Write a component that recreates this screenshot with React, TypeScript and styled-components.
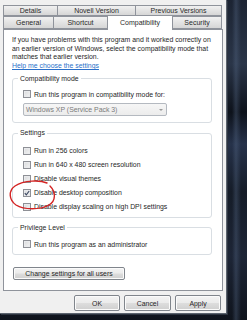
import React from "react";
import styled, { createGlobalStyle } from "styled-components";

const Global = createGlobalStyle`
  html, body { margin: 0; padding: 0; }
  body {
    width: 247px;
    height: 320px;
    overflow: hidden;
    background: #121a26;
    font-family: "Liberation Sans", Arial, sans-serif;
  }
  * { box-sizing: border-box; }
`;

const Screen = styled.div`
  position: relative;
  width: 247px;
  height: 320px;
  overflow: hidden;
  background:
    linear-gradient(90deg, rgba(0,0,0,0) 0, rgba(0,0,0,0) 232px, rgba(90,110,140,0.35) 236px, rgba(0,0,0,0) 241px),
    linear-gradient(180deg, #1c2433 0%, #2a3548 20%, #0d121b 35%, #26324a 45%, #151c28 60%, #1d2536 80%, #0f141d 100%);
`;

const Dialog = styled.div`
  width: 227px;
  height: 314px;
  background: #f0f0f0;
  border-right: 1px solid #5b636e;
  border-bottom: 1px solid #5b636e;
  padding: 5px 0 0 3px;
  display: flex;
  flex-direction: column;
  box-shadow: 1px 1px 0 #2d3440;
`;

const TabRow = styled.div`
  display: flex;
  align-items: flex-end;
  height: ${(p: { $h: number }) => p.$h}px;
`;

const Tab = styled.div<{ $w: number; $active?: boolean }>`
  width: ${(p) => p.$w}px;
  margin-left: -1px;
  &:first-child { margin-left: 0; }
  height: ${(p) => (p.$active ? 15 : 100)}${(p) => (p.$active ? "px" : "%")};
  border: 1px solid #8f939b;
  border-bottom: ${(p) => (p.$active ? "none" : "1px solid #8f939b")};
  background: ${(p) =>
    p.$active ? "#ffffff" : "linear-gradient(180deg, #f1f1f1 0%, #e3e3e3 50%, #d6d6d6 100%)"};
  color: #2a2a2a;
  font-size: 7px;
  line-height: 1;
  display: flex;
  align-items: ${(p) => (p.$active ? "flex-start" : "center")};
  padding-top: ${(p) => (p.$active ? 3 : 0)}px;
  justify-content: center;
  white-space: nowrap;
  position: relative;
  z-index: ${(p) => (p.$active ? 2 : 1)};
  margin-bottom: ${(p) => (p.$active ? -1 : 0)}px;
`;

const Page = styled.div`
  width: 220px;
  height: 262px;
  background: #ffffff;
  border: 1px solid #8f939b;
  padding: 6px 10px 0 8px;
  display: flex;
  flex-direction: column;
  color: #262626;
  font-size: 6.9px;
`;

const Intro = styled.p`
  margin: 0;
  line-height: 8.5px;
`;

const Link = styled.a`
  color: #2a6fc9;
  text-decoration: underline;
  line-height: 8.5px;
  margin-top: 0.5px;
  align-self: flex-start;
`;

const Group = styled.fieldset<{ $mt: number; $pb: number }>`
  margin: ${(p) => p.$mt}px 0 0 0;
  padding: 0 0 ${(p) => p.$pb}px 10px;
  border: 1px solid #d9dee3;
  border-radius: 3px;
  min-width: 0;
  display: flex;
  flex-direction: column;
`;

const Legend = styled.legend`
  padding: 0 2px;
  margin-left: -5px;
  line-height: 8.5px;
  color: #262626;
`;

const Row = styled.div<{ $h: number }>`
  display: flex;
  align-items: center;
  height: ${(p) => p.$h}px;
  gap: 3px;
  white-space: nowrap;
`;

const Box = styled.span<{ $checked?: boolean }>`
  width: 8px;
  height: 8px;
  flex: none;
  border: 1px solid #8e9096;
  background: linear-gradient(135deg, #d8d9db 0%, #f4f4f4 100%);
  box-shadow: inset 0 0 0 1px #e9eaec;
  display: flex;
  align-items: center;
  justify-content: center;
`;

const Select = styled.div`
  width: 144px;
  height: 13px;
  margin-top: 4px;
  border: 1px solid #b4b9c0;
  border-radius: 2px;
  background: linear-gradient(180deg, #f6f6f6 0%, #ececec 100%);
  color: #7b7b7b;
  display: flex;
  align-items: center;
  justify-content: space-between;
  padding: 0 3px 0 2px;
`;

const Arrow = styled.span`
  width: 0;
  height: 0;
  border-left: 2px solid transparent;
  border-right: 2px solid transparent;
  border-top: 2px solid #9a9a9a;
`;

const Button = styled.div<{ $w: number }>`
  width: ${(p) => p.$w}px;
  height: 13px;
  border: 1px solid #80858c;
  border-radius: 2px;
  background: linear-gradient(180deg, #f4f4f4 0%, #ebebeb 48%, #dddddd 52%, #cfcfcf 100%);
  box-shadow: inset 0 0 0 1px #fbfbfb;
  display: flex;
  align-items: center;
  justify-content: center;
  color: #262626;
  font-size: 6.9px;
  white-space: nowrap;
`;

const PageButton = styled(Button)`
  margin-top: 12px;
  margin-left: 1px;
`;

const Footer = styled.div`
  display: flex;
  gap: 4px;
  padding-left: 71px;
  margin-top: 4px;
`;

const FooterButton = styled(Button)`
  height: 16px;
`;

const Mark = styled.svg`
  position: absolute;
  left: 0;
  top: 0;
  pointer-events: none;
`;

function Check({ label, checked, h }: { label: string; checked?: boolean; h: number }) {
  return (
    <Row $h={h}>
      <Box $checked={checked}>
        {checked && (
          <svg width="6" height="6" viewBox="0 0 6 6">
            <path d="M0.8 3.2 L2.3 4.8 L5.2 1" fill="none" stroke="#3a4660" strokeWidth="1.1" />
          </svg>
        )}
      </Box>
      <span>{label}</span>
    </Row>
  );
}

export default function App() {
  return (
    <Screen>
      <Global />
      <Dialog>
        <TabRow $h={11}>
          <Tab $w={55}>Details</Tab>
          <Tab $w={79}>Novell Version</Tab>
          <Tab $w={87}>Previous Versions</Tab>
        </TabRow>
        <TabRow $h={13}>
          <Tab $w={51}>General</Tab>
          <Tab $w={55}>Shortcut</Tab>
          <Tab $w={66} $active>Compatibility</Tab>
          <Tab $w={50}>Security</Tab>
        </TabRow>
        <Page>
          <Intro>
            If you have problems with this program and it worked correctly on
            <br />
            an earlier version of Windows, select the compatibility mode that
            <br />
            matches that earlier version.
          </Intro>
          <Link>Help me choose the settings</Link>
          <Group $mt={4} $pb={6}>
            <Legend>Compatibility mode</Legend>
            <Row $h={6} />
            <Check h={10} label="Run this program in compatibility mode for:" />
            <Select>
              <span>Windows XP (Service Pack 3)</span>
              <Arrow />
            </Select>
          </Group>
          <Group $mt={6} $pb={3}>
            <Legend>Settings</Legend>
            <Row $h={6} />
            <Check h={14} label="Run in 256 colors" />
            <Check h={14} label="Run in 640 x 480 screen resolution" />
            <Check h={14} label="Disable visual themes" />
            <Check h={14} checked label="Disable desktop composition" />
            <Check h={14} label="Disable display scaling on high DPI settings" />
          </Group>
          <Group $mt={6} $pb={3}>
            <Legend>Privilege Level</Legend>
            <Row $h={5} />
            <Check h={14} label="Run this program as an administrator" />
          </Group>
          <PageButton $w={112}>Change settings for all users</PageButton>
        </Page>
        <Footer>
          <FooterButton $w={46}>OK</FooterButton>
          <FooterButton $w={47}>Cancel</FooterButton>
          <FooterButton $w={46}>Apply</FooterButton>
        </Footer>
      </Dialog>
      <Mark width="247" height="320" viewBox="0 0 247 320">
        <path
          d="M47 183 C40 180 24 180 15 186 C8 191 9 200 16 205 C24 210 40 210 49 205 C56 201 56 192 50 186"
          fill="none"
          stroke="#d42424"
          strokeWidth="1.4"
          strokeLinecap="round"
        />
      </Mark>
    </Screen>
  );
}
